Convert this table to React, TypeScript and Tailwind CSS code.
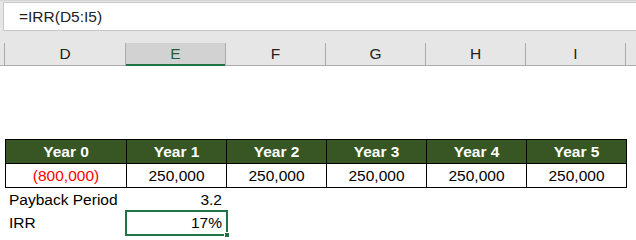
import React from 'react';

const columns = ['D', 'E', 'F', 'G', 'H', 'I'];
const widths = ['w-[121px]', 'w-[100px]', 'w-[100px]', 'w-[100px]', 'w-[100px]', 'w-[100px]'];

const years = ['Year 0', 'Year 1', 'Year 2', 'Year 3', 'Year 4', 'Year 5'];
const cashFlows = ['(800,000)', '250,000', '250,000', '250,000', '250,000', '250,000'];

const FormulaBar: React.FC<{ formula: string }> = ({ formula }) => (
  <div className="h-[31px] border-t border-[#d4d4d4] bg-[#e6e6e6] pl-[3px] pt-px">
    <div className="flex h-[29px] items-center border-t border-b border-l border-[#c8c8c8] bg-white pl-[15px] text-[15.5px] text-[#222]">
      {formula}
    </div>
  </div>
);

const ColumnHeaders: React.FC<{ active: string }> = ({ active }) => (
  <div className="flex h-[35px] items-end bg-[#e6e6e6]">
    <div className="flex h-[23px] w-full border-b border-[#ababab]">
      <div className="w-[5px] border-r border-[#ababab]" />
      {columns.map((col, i) => {
        const isActive = col === active;
        return (
          <div
            key={col}
            className={`${widths[i]} flex items-center justify-center border-r border-[#ababab] text-[15.5px] ${
              isActive ? 'relative bg-[#d2d2d2] text-[#1e5e3c]' : 'text-[#222]'
            }`}
          >
            {col}
            {isActive && <div className="absolute -bottom-px left-0 right-0 h-[2px] bg-[#217346]" />}
          </div>
        );
      })}
    </div>
  </div>
);

export default function App() {
  return (
    <div
      className="h-[240px] w-[636px] overflow-hidden bg-white text-black"
      style={{ fontFamily: '"Liberation Sans", Arial, sans-serif' }}
    >
      <FormulaBar formula="=IRR(D5:I5)" />
      <ColumnHeaders active="E" />

      <div className="h-[73px]" />

      {/* cash flow table */}
      <div className="ml-[5px] flex w-fit flex-col text-[15.5px]">
        <div className="flex w-fit border-t border-l border-black bg-[#375623]">
          {years.map((y, i) => (
            <div
              key={y}
              className={`${widths[i]} flex h-[24px] items-center justify-center border-r border-b border-black font-bold text-white`}
            >
              {y}
            </div>
          ))}
        </div>
        <div className="flex w-fit border-l border-black">
          {cashFlows.map((v, i) => (
            <div
              key={i}
              className={`${widths[i]} flex h-[24px] items-center justify-center border-r border-b border-black ${
                i === 0 ? 'text-[#ff0000]' : 'text-black'
              }`}
            >
              {v}
            </div>
          ))}
        </div>

        <div className="flex h-[23px] items-center">
          <div className="w-[121px] pl-[4px]">Payback Period</div>
          <div className="w-[100px] pr-[4px] text-right">3.2</div>
        </div>
        <div className="flex h-[23px] items-center">
          <div className="w-[121px] pl-[4px]">IRR</div>
          <div className="relative flex h-[23px] w-[100px] items-center justify-end pr-[4px]">
            17%
            <div className="absolute -top-px -left-px -right-[2px] -bottom-[2px] border-2 border-[#217346]" />
            <div className="absolute -bottom-[4px] -right-[4px] h-[6px] w-[6px] border border-white bg-[#217346]" />
          </div>
        </div>
      </div>
    </div>
  );
}
